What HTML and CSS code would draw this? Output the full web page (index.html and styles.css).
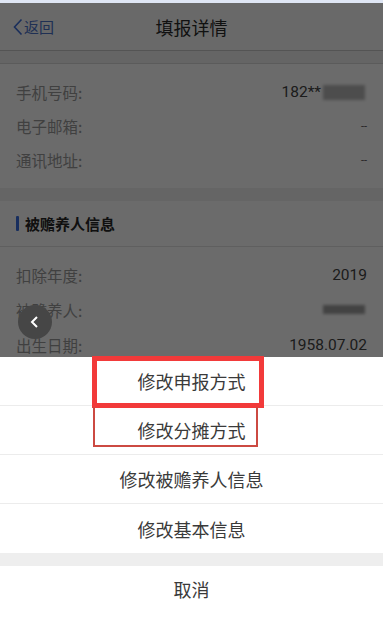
FILE: index.html
```html
<!DOCTYPE html>
<html lang="zh">
<head>
<meta charset="utf-8">
<title>填报详情</title>
<link rel="stylesheet" href="styles.css">
</head>
<body>
<div class="screen">
  <div class="topstrip"></div>
  <div class="nav">
    <div class="back">
      <svg class="back-icon" width="10" height="18" viewBox="0 0 10 18"><polyline points="8.5,1.5 1.5,9 8.5,16.5" fill="none" stroke="#3f6fd8" stroke-width="1.6"/></svg>
      <span>返回</span>
    </div>
    <div class="title">填报详情</div>
  </div>
  <div class="gap gap-top"></div>
  <div class="group">
    <div class="row"><span class="label">手机号码:</span><span class="value">182**<i class="blur blur-phone"></i></span></div>
    <div class="row"><span class="label">电子邮箱:</span><span class="value dash">--</span></div>
    <div class="row"><span class="label">通讯地址:</span><span class="value dash">--</span></div>
  </div>
  <div class="gap gap-mid"></div>
  <div class="section"><span class="bar"></span><span class="section-title">被赡养人信息</span></div>
  <div class="group group2">
    <div class="row"><span class="label">扣除年度:</span><span class="value">2019</span></div>
    <div class="row"><span class="label">被赡养人:</span><span class="value"><i class="blur blur-name"></i></span></div>
    <div class="row"><span class="label">出生日期:</span><span class="value">1958.07.02</span></div>
  </div>

  <div class="mask"></div>

  <div class="float-btn">
    <svg width="12" height="14" viewBox="0 0 12 14"><polyline points="8,2 3,7 8,12" fill="none" stroke="#ffffff" stroke-width="2"/></svg>
  </div>

  <div class="sheet">
    <div class="item">修改申报方式</div>
    <div class="item">修改分摊方式</div>
    <div class="item">修改被赡养人信息</div>
    <div class="item last">修改基本信息</div>
    <div class="sheet-gap"></div>
    <div class="item cancel">取消</div>
  </div>

  <div class="mark mark1"></div>
  <div class="mark mark2"></div>
</div>
</body>
</html>
```
FILE: styles.css
```css
html, body {
  margin: 0;
  padding: 0;
  background: #ffffff;
}
body {
  font-family: "Noto Sans CJK SC", "Noto Sans", sans-serif;
}
.screen {
  position: relative;
  width: 383px;
  height: 626px;
  overflow: hidden;
  background: #ffffff;
}
.topstrip {
  height: 3px;
  background: #dfe6f4;
}
.nav {
  position: relative;
  height: 47px;
  display: flex;
  align-items: center;
  justify-content: center;
  border-bottom: 1px solid #c8c8c8;
  background: #fafafa;
}
.back {
  position: absolute;
  left: 13px;
  top: 0;
  height: 47px;
  display: flex;
  align-items: center;
  gap: 1px;
  color: #4a72c8;
  font-size: 15px;
}
.title {
  font-size: 18px;
  color: #2a2a2a;
}
.gap {
  background: #f0f0f0;
}
.gap-top {
  height: 12px;
  border-bottom: 1px solid #d9d9d9;
}
.gap-mid {
  height: 13px;
}
.group {
  padding: 11px 16px 11px 16px;
}
.group2 {
  padding-top: 10px;
}
.row {
  height: 34px;
  display: flex;
  align-items: center;
  justify-content: space-between;
}
.group2 .row {
  height: 35px;
}
.label {
  font-size: 15.5px;
  color: #9a9a9a;
}
.value {
  font-family: "Roboto", "Noto Sans CJK SC", sans-serif;
  font-size: 15.5px;
  color: #444444;
  display: flex;
  align-items: center;
}
.dash {
  font-size: 11px;
  color: #555555;
}
.blur {
  display: inline-block;
  background: #b8b8b8;
  filter: blur(1.5px);
}
.blur-phone {
  width: 42px;
  height: 15px;
  margin-left: 2px;
  margin-right: 2px;
}
.blur-name {
  width: 42px;
  height: 9px;
  margin-right: 2px;
  background: #a0a0a0;
}
.section {
  height: 45px;
  display: flex;
  align-items: center;
  padding-left: 16px;
  border-bottom: 1px solid #e2e2e2;
}
.bar {
  width: 3px;
  height: 15px;
  background: #3a6fe0;
  border-radius: 1px;
  margin-right: 6px;
}
.section-title {
  font-size: 15px;
  font-weight: bold;
  color: #262626;
}
.mask {
  position: absolute;
  left: 0;
  top: 3px;
  right: 0;
  bottom: 0;
  background: rgba(0, 0, 0, 0.58);
}
.float-btn {
  position: absolute;
  left: 18px;
  top: 305px;
  width: 34px;
  height: 34px;
  border-radius: 50%;
  background: #464646;
  display: flex;
  align-items: center;
  justify-content: center;
}
.sheet {
  position: absolute;
  left: 0;
  right: 0;
  top: 357px;
  bottom: 0;
  background: #ffffff;
  display: flex;
  flex-direction: column;
}
.item {
  height: 49px;
  flex: none;
  display: flex;
  align-items: center;
  justify-content: center;
  font-size: 18px;
  color: #3a3a3a;
  border-bottom: 1px solid #ececec;
  box-sizing: border-box;
}
.item.last {
  border-bottom: none;
}
.sheet-gap {
  height: 13px;
  flex: none;
  background: #eeeeee;
}
.item.cancel {
  height: 46px;
  border-bottom: none;
}
.mark {
  position: absolute;
  box-sizing: border-box;
}
.mark1 {
  left: 92px;
  top: 356px;
  width: 172px;
  height: 52px;
  border: 5px solid #f23a3a;
}
.mark2 {
  left: 93px;
  top: 407px;
  width: 165px;
  height: 40px;
  border: 2px solid #cc4a42;
  border-top: none;
}
```
